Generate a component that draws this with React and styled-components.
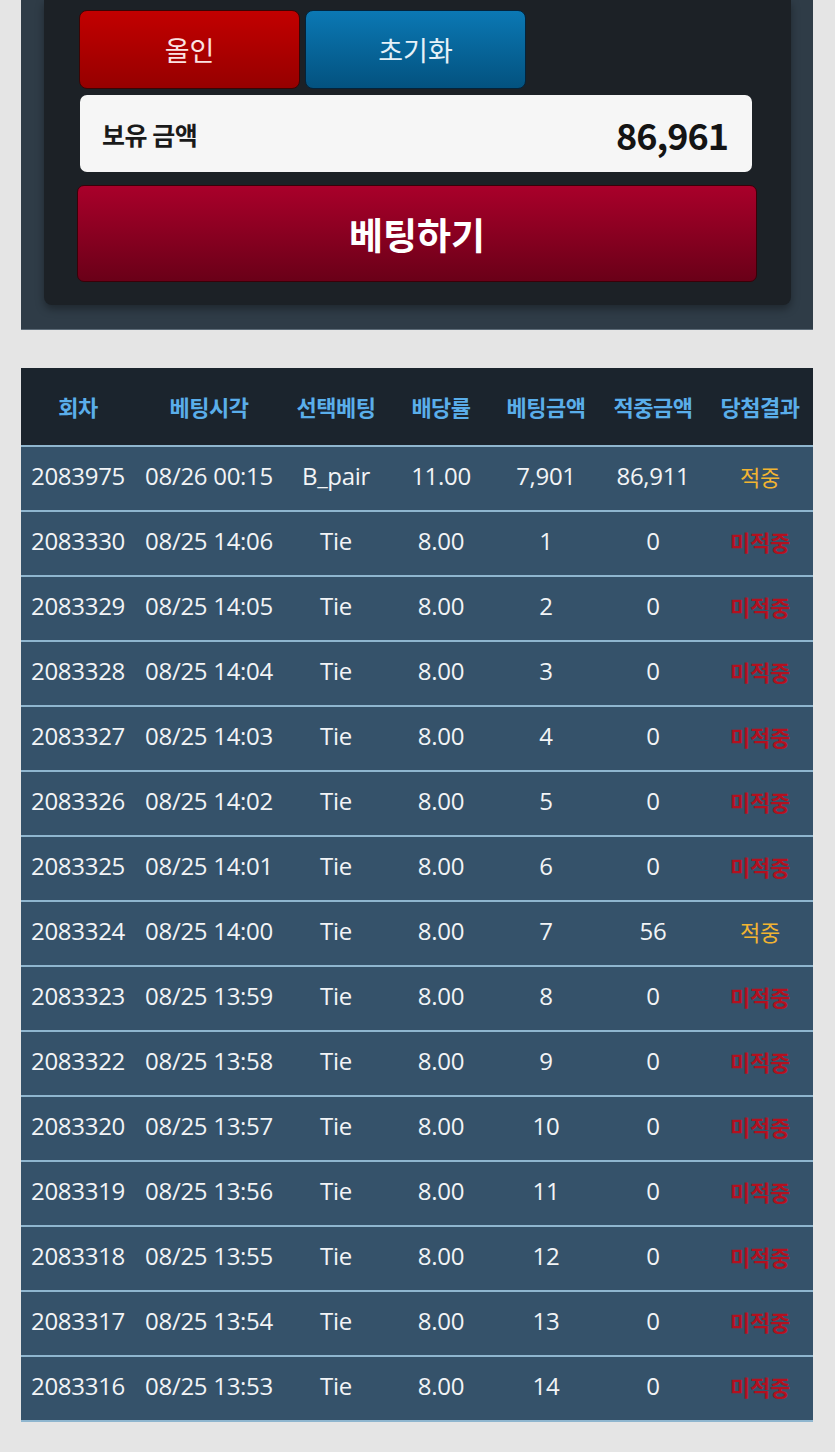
import React from "react"
import styled, { createGlobalStyle } from "styled-components"

const GlobalStyle = createGlobalStyle`
  body {
    margin: 0;
    background: #e5e5e5;
    font-family: "Open Sans", "Noto Sans CJK KR", sans-serif;
  }
`

const rows = [
  ["2083975", "08/26 00:15", "B_pair", "11.00", "7,901", "86,911", true],
  ["2083330", "08/25 14:06", "Tie", "8.00", "1", "0", false],
  ["2083329", "08/25 14:05", "Tie", "8.00", "2", "0", false],
  ["2083328", "08/25 14:04", "Tie", "8.00", "3", "0", false],
  ["2083327", "08/25 14:03", "Tie", "8.00", "4", "0", false],
  ["2083326", "08/25 14:02", "Tie", "8.00", "5", "0", false],
  ["2083325", "08/25 14:01", "Tie", "8.00", "6", "0", false],
  ["2083324", "08/25 14:00", "Tie", "8.00", "7", "56", true],
  ["2083323", "08/25 13:59", "Tie", "8.00", "8", "0", false],
  ["2083322", "08/25 13:58", "Tie", "8.00", "9", "0", false],
  ["2083320", "08/25 13:57", "Tie", "8.00", "10", "0", false],
  ["2083319", "08/25 13:56", "Tie", "8.00", "11", "0", false],
  ["2083318", "08/25 13:55", "Tie", "8.00", "12", "0", false],
  ["2083317", "08/25 13:54", "Tie", "8.00", "13", "0", false],
  ["2083316", "08/25 13:53", "Tie", "8.00", "14", "0", false],
]

const headers = ["회차", "베팅시각", "선택베팅", "배당률", "베팅금액", "적중금액", "당첨결과"]
const widths = [114, 148, 106, 104, 106, 108, 106]

const App = () => (
  <Page>
    <GlobalStyle />
    <Panel>
      <Card>
        <ButtonRow>
          <SmallButton variant="red">올인</SmallButton>
          <SmallButton variant="blue">초기화</SmallButton>
        </ButtonRow>
        <Balance>
          <BalanceLabel>보유 금액</BalanceLabel>
          <BalanceValue>86,961</BalanceValue>
        </Balance>
        <BetButton>베팅하기</BetButton>
      </Card>
    </Panel>

    <Table>
      <colgroup>
        {widths.map((w, i) => (
          <col key={i} style={{ width: w }} />
        ))}
      </colgroup>
      <thead>
        <tr>
          {headers.map(h => (
            <Th key={h}>{h}</Th>
          ))}
        </tr>
      </thead>
      <tbody>
        {rows.map(r => (
          <Tr key={r[0]}>
            <Td>{r[0]}</Td>
            <Td>{r[1]}</Td>
            <Td>{r[2]}</Td>
            <Td>{r[3]}</Td>
            <Td>{r[4]}</Td>
            <Td>{r[5]}</Td>
            <Result win={r[6]}>{r[6] ? "적중" : "미적중"}</Result>
          </Tr>
        ))}
      </tbody>
    </Table>
  </Page>
)
export default App

const Page = styled.div`
  padding: 0 22px 28px 21px;
`

const Panel = styled.div`
  background: #2f3c47;
  padding: 0 22px 24px 23px;
  border-bottom: 1px solid #5d6b77;
`

const Card = styled.div`
  background: #1c2126;
  border-radius: 0 0 8px 8px;
  box-shadow: 0 4px 8px rgba(0, 0, 0, 0.35);
  padding: 10px 34px 23px 33px;
  display: flex;
  flex-direction: column;
`

const ButtonRow = styled.div`
  display: flex;
  gap: 5px;
  padding-left: 2px;
`

const SmallButton = styled.div`
  width: 221px;
  height: 79px;
  box-sizing: border-box;
  border-radius: 8px;
  border: 1px solid ${p => (p.variant === "red" ? "#3a0505" : "#04233a")};
  background: ${p =>
    p.variant === "red"
      ? "linear-gradient(#c20000, #960000)"
      : "linear-gradient(#0b78b4, #03527f)"};
  color: ${p => (p.variant === "red" ? "#fbe3e3" : "#e6f1f8")};
  font-family: "Noto Sans CJK KR", sans-serif;
  font-size: 27px;
  display: flex;
  align-items: center;
  justify-content: center;
`

const Balance = styled.div`
  margin: 6px 5px 0 3px;
  height: 77px;
  background: #f6f6f6;
  border-radius: 7px;
  display: flex;
  align-items: center;
  justify-content: space-between;
  padding: 0 24px 0 22px;
`

const BalanceLabel = styled.span`
  font-family: "Noto Sans CJK KR", sans-serif;
  font-weight: 700;
  font-size: 25px;
  letter-spacing: -0.5px;
  color: #1a1a1a;
`

const BalanceValue = styled.span`
  font-family: "Noto Sans CJK KR", sans-serif;
  font-weight: 700;
  font-size: 36px;
  color: #141414;
  letter-spacing: -1px;
`

const BetButton = styled.div`
  margin-top: 13px;
  height: 97px;
  box-sizing: border-box;
  border-radius: 7px;
  border: 1px solid #3a0008;
  background: linear-gradient(#a9002a, #6a0018);
  color: #fff;
  font-family: "Noto Sans CJK KR", sans-serif;
  font-weight: 700;
  font-size: 37px;
  display: flex;
  align-items: center;
  justify-content: center;
`

const Table = styled.table`
  margin-top: 38px;
  width: 100%;
  border-collapse: collapse;
  table-layout: fixed;
`

const Th = styled.th`
  background: #1b242d;
  height: 75px;
  color: #5aaeea;
  font-family: "Noto Sans CJK KR", sans-serif;
  font-weight: 700;
  font-size: 22px;
  letter-spacing: -0.5px;
  padding: 0 0 2px;
  text-align: center;
  border-bottom: 2px solid #8fb6cf;
  white-space: nowrap;
`

const Tr = styled.tr`
  background: #35526a;
  border-bottom: 2px solid #8fb6cf;
`

const Td = styled.td`
  height: 59px;
  padding: 0 0 4px;
  text-align: center;
  color: #f2f4f6;
  font-size: 24px;
  line-height: 1.2;
  letter-spacing: -0.3px;
  white-space: nowrap;
`

const Result = styled(Td)`
  color: ${p => (p.win ? "#f2b431" : "#b3101f")};
  font-family: "Noto Sans CJK KR", sans-serif;
  font-size: 22px;
  font-weight: ${p => (p.win ? 400 : 700)};
`
